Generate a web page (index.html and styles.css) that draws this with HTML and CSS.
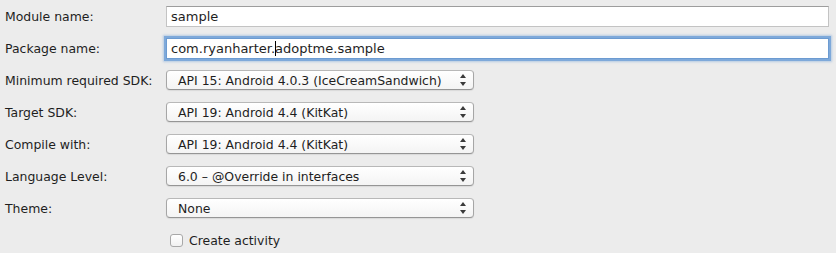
FILE: index.html
```html
<!DOCTYPE html>
<html lang="en">
<head>
  <meta charset="UTF-8">
  <title>New Module</title>
  <link rel="stylesheet" href="styles.css">
</head>
<body>
  <form class="module-form">
    <div class="form-row">
      <label class="form-label">Module name:</label>
      <div class="text-field wide">sample</div>
    </div>

    <div class="form-row">
      <label class="form-label">Package name:</label>
      <div class="text-field wide focused">com.ryanharter.<span class="caret"></span>adoptme.sample</div>
    </div>

    <div class="form-row">
      <label class="form-label">Minimum required SDK:</label>
      <div class="select-box">
        <span class="select-value">API 15: Android 4.0.3 (IceCreamSandwich)</span>
        <span class="select-arrows"></span>
      </div>
    </div>

    <div class="form-row">
      <label class="form-label">Target SDK:</label>
      <div class="select-box">
        <span class="select-value">API 19: Android 4.4 (KitKat)</span>
        <span class="select-arrows"></span>
      </div>
    </div>

    <div class="form-row">
      <label class="form-label">Compile with:</label>
      <div class="select-box">
        <span class="select-value">API 19: Android 4.4 (KitKat)</span>
        <span class="select-arrows"></span>
      </div>
    </div>

    <div class="form-row">
      <label class="form-label">Language Level:</label>
      <div class="select-box">
        <span class="select-value">6.0 – @Override in interfaces</span>
        <span class="select-arrows"></span>
      </div>
    </div>

    <div class="form-row">
      <label class="form-label">Theme:</label>
      <div class="select-box">
        <span class="select-value">None</span>
        <span class="select-arrows"></span>
      </div>
    </div>

    <div class="form-row">
      <span class="form-label"></span>
      <label class="check-option">
        <span class="check-box"></span>
        Create activity
      </label>
    </div>
  </form>
</body>
</html>
```

FILE: styles.css
```css
:root {
  --window-bg: #ececec;
  --text-color: #1e1e1e;
  --field-border: #c3c3c3;
  --field-border-top: #9d9d9d;
  --select-border: #a6a6a6;
  --focus-ring: #7ea9da;
}

* {
  margin: 0;
  padding: 0;
  box-sizing: border-box;
}

body {
  background-color: var(--window-bg);
  color: var(--text-color);
  font-family: 'DejaVu Sans', sans-serif;
  font-size: 12.45px;
  width: 836px;
  height: 253px;
  overflow: hidden;
}

.module-form {
  display: flex;
  flex-direction: column;
}

.form-row {
  display: flex;
  align-items: center;
  height: 32px;
}

.form-label {
  width: 166px;
  padding-left: 5px;
  flex-shrink: 0;
}

.text-field {
  height: 21px;
  line-height: 19px;
  padding: 0 4px;
  background-color: #ffffff;
  border: 1px solid var(--field-border);
  border-top-color: var(--field-border-top);
  white-space: nowrap;
  font-size: 13px;
}

.text-field.wide {
  width: 663px;
}

.text-field.focused {
  border-color: #6c9bd1;
  box-shadow: 0 0 0 2px var(--focus-ring), 0 0 2px 3px rgba(126, 169, 218, 0.5);
}

.caret {
  display: inline-block;
  width: 1px;
  height: 15px;
  margin-right: -1px;
  vertical-align: -3px;
  background-color: #000000;
}

.select-box {
  position: relative;
  display: flex;
  align-items: center;
  width: 308px;
  height: 20px;
  padding-left: 11px;
  background: linear-gradient(#ffffff, #f4f4f4);
  border: 1px solid var(--select-border);
  border-top-color: #b8b8b8;
  border-bottom-color: #959595;
  border-radius: 4px;
  box-shadow: 0 1px 1px rgba(0, 0, 0, 0.08);
}

.select-value {
  flex: 1;
  white-space: nowrap;
}

.select-arrows {
  position: relative;
  width: 7px;
  height: 12px;
  margin-right: 6px;
}

.select-arrows:before,
.select-arrows:after {
  position: absolute;
  content: "";
  left: 0;
  border-left: 3.5px solid transparent;
  border-right: 3.5px solid transparent;
}

.select-arrows:before {
  top: 0;
  border-bottom: 4px solid #3a3a3a;
}

.select-arrows:after {
  bottom: 0;
  border-top: 4px solid #3a3a3a;
}

.check-option {
  display: flex;
  align-items: center;
  gap: 6px;
  padding-left: 4px;
}

.check-box {
  width: 13px;
  height: 13px;
  background: linear-gradient(#ffffff, #f1f1f1);
  border: 1px solid #a8a8a8;
  border-radius: 3px;
}
```
